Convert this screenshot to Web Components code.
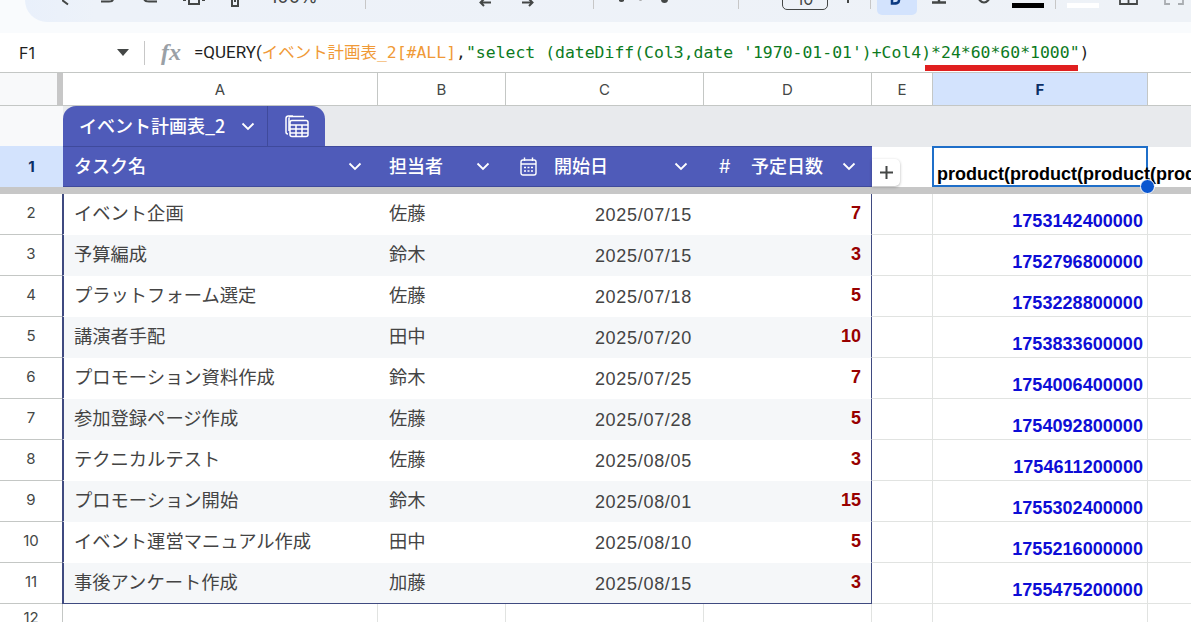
<!DOCTYPE html>
<html lang="ja">
<head>
<meta charset="utf-8">
<title>イベント計画表</title>
<style>
  html, body { margin: 0; height: 622px; overflow: hidden; background: #fff; }
  body {
    --cols: 63px 315px 128px 198px 168px 61px 215px 1fr;
    --cell-font: "Liberation Sans", "Noto Sans CJK JP", sans-serif;
    --ui-font: Inter, Roboto, "Noto Sans CJK JP", sans-serif;
    font-family: var(--cell-font);
  }
</style>
</head>
<body>
<sheet-toolbar></sheet-toolbar>
<formula-bar cell="F1">
  <fx-token>=QUERY(</fx-token><fx-token kind="range">イベント計画表_2[#ALL]</fx-token><fx-token kind="mono">,</fx-token><fx-token kind="str">"select (dateDiff(Col3,date '1970-01-01')+Col4)*24*60*60*1000"</fx-token><fx-token kind="mono">)</fx-token>
</formula-bar>
<column-headers></column-headers>
<table-tab-row name="イベント計画表_2"></table-tab-row>
<table-header-row></table-header-row>
<freeze-line></freeze-line>
<div id="rows"></div>

<script>
// chevron used by the table header and the tab
const chevron = `<svg width="14" height="9" viewBox="0 0 14 9" fill="none" stroke="#fff" stroke-width="1.8"><path d="M1.5 1.5 7 7l5.5-5.5"/></svg>`;

class SheetToolbar extends HTMLElement {
    constructor() {
        super();
        this.attachShadow({ mode: 'open' });
    }
    connectedCallback() {
        const ic = (left, width, body) =>
            `<svg style="margin-left:${left}px;flex:none" width="${width}" height="22" viewBox="0 0 ${width} 22" fill="none" stroke="#444746" stroke-width="2">${body}</svg>`;
        this.shadowRoot.innerHTML = `
            <style>
                :host { display: block; height: 33px; background: #f9fbfd; overflow: hidden; }
                .pill {
                    display: flex; align-items: flex-start; height: 22px; margin-left: 25px;
                    background: linear-gradient(90deg, #e9f0fb 0, #edf2f9 70px, #eef2f7 100%);
                    border-bottom-left-radius: 22px; overflow: hidden;
                }
                .zoom { flex: none; margin: -14px 0 0 31px; width: 50px; font: 18px var(--ui-font); color: #444746; }
                .sep { flex: none; width: 1px; height: 9px; background: #c7c7c7; }
                .size { flex: none; box-sizing: border-box; margin: -12px 0 0 0; width: 46px; height: 22px; border: 1px solid #444746; border-radius: 5px; text-align: center; font: 16px var(--ui-font); color: #444746; }
                .bold { flex: none; width: 40px; height: 15px; background: #d3e3fd; border-radius: 0 0 5px 5px; margin-left: 6px; }
                .bar { flex: none; width: 32px; height: 5px; margin-top: 3px; }
            </style>
            <div class="pill">
                ${ic(37, 7, '<path d="M0 0 6 4.5"/>')}
                ${ic(32, 14, '<path d="M0 1.5h8q4 0 4-2.5"/>')}
                ${ic(27, 16, '<path d="M15 1.5H7Q2 1.500 2-2"/>')}
                ${ic(25, 22, '<path d="M0 0h3v0M19 0h3M6 0v4h10V0"/>')}
                ${ic(26, 8, '<path d="M1 0v6h6V0M4 0v2"/>')}
                <span class="zoom">100%</span>
                <span class="sep" style="margin-left:45px"></span>
                ${ic(113, 12, '<path d="M12 2.500H2M5-1 1.500 2.500 5 6"/>')}
                ${ic(31, 12, '<path d="M0 2.500h10M7-1l3.500 3.500L7 6"/>')}
                <span class="sep" style="margin-left:59px"></span>
                ${ic(25, 5, '<circle cx="2.500" cy="-1" r="2" fill="#444746"/>')}
                ${ic(14, 5, '<circle cx="2.500" cy="-1" r="1.500" stroke-width="1" stroke="#999"/>')}
                ${ic(18, 7, '<circle cx="3.500" cy="-.5" r="2.500" fill="#444746"/>')}
                <span class="sep" style="margin-left:70px"></span>
                <span class="size" style="margin-left:43px">10</span>
                ${ic(18, 4, '<path d="M2 0v3"/>')}
                <span class="sep" style="margin-left:20px"></span>
                <span class="bold"></span>
                ${ic(-27, 12, '<path d="M2-3Q9-3 9 .5T2 3.500z" stroke="#0b3a82" stroke-width="2.500"/>')}
                ${ic(30, 14, '<path d="M0 2.500h14M7 0v2" stroke-width="2.400"/>')}
                ${ic(31, 14, '<path d="M1.500-4a5.500 6.500 0 0 0 11 0" stroke-width="2.200"/>')}
                <span class="bar" style="margin-left:21px;background:#000"></span>
                <span class="sep" style="margin-left:11px"></span>
                <span class="bar" style="margin-left:11px;background:#fff"></span>
                ${ic(20, 19, '<path d="M1 0v4h17V0M9.500 0v4" stroke-width="1.800"/>')}
                ${ic(26, 20, '<path d="M1 0v4h5M14 4h5V0" stroke="#a9adb1" stroke-width="1.800"/>')}
            </div>
        `;
    }
}
customElements.define('sheet-toolbar', SheetToolbar);

class FxToken extends HTMLElement {
    constructor() {
        super();
        this.attachShadow({ mode: 'open' });
        // no whitespace round the slot: tokens sit edge to edge
        this.shadowRoot.innerHTML = `<style>
                :host { color: #1f1f1f; font-family: "Roboto", "Noto Sans CJK JP", sans-serif; }
                :host([kind]) { font-family: "DejaVu Sans Mono", "Noto Sans CJK JP", monospace; font-size: 16.45px; }
                :host([kind="range"]) { color: #f09a37; }
                :host([kind="str"]) { color: #0c7a1e; }
            </style><slot></slot>`;
    }
}
customElements.define('fx-token', FxToken);

class FormulaBar extends HTMLElement {
    constructor() {
        super();
        this.attachShadow({ mode: 'open' });
    }
    connectedCallback() {
        this.shadowRoot.innerHTML = `
            <style>
                :host { display: flex; align-items: center; position: relative; height: 39px; border-bottom: 1px solid #c4c7c5; background: #fff; }
                .name { width: 98px; margin-left: 19px; font: 16px var(--ui-font); color: #1f1f1f; }
                .caret { width: 0; height: 0; border: 6px solid transparent; border-top: 7px solid #444746; border-bottom: 0; }
                .sep { width: 1px; height: 24px; background: #c7c7c7; margin-left: 15px; }
                .fx { margin-left: 16px; width: 33px; font: italic bold 24px "Liberation Serif", serif; color: #9aa0a6; }
                .text { font-size: 17px; white-space: nowrap; margin-bottom: 3px; }
                /* annotation drawn over the bar */
                .mark { position: absolute; left: 925px; top: 32px; width: 153px; height: 6px; background: #e01f1f; }
            </style>
            <span class="name">${this.getAttribute('cell')}</span>
            <span class="caret"></span>
            <span class="sep"></span>
            <span class="fx">fx</span>
            <span class="text"><slot></slot></span>
            <span class="mark"></span>
        `;
    }
}
customElements.define('formula-bar', FormulaBar);

class ColumnHeaders extends HTMLElement {
    constructor() {
        super();
        this.attachShadow({ mode: 'open' });
    }
    connectedCallback() {
        const labels = ['A', 'B', 'C', 'D', 'E', 'F', ''];
        this.shadowRoot.innerHTML = `
            <style>
                :host { display: grid; grid-template-columns: var(--cols); height: 33px; border-bottom: 1px solid #c4c7c5; box-sizing: border-box; }
                .corner { background: #f8f9fa; border-right: 6px solid #c7c7c7; }
                .col { display: flex; align-items: center; justify-content: center; border-right: 1px solid #c4c7c5; font: 15px var(--ui-font); color: #444746; }
                .col.on { background: #d3e3fd; color: #0b2f66; font-weight: 700; }
                .col:last-child { border-right: 0; }
            </style>
            <div class="corner"></div>
            ${labels.map(l => `<div class="col ${l === 'F' ? 'on' : ''}">${l}</div>`).join('')}
        `;
    }
}
customElements.define('column-headers', ColumnHeaders);

class TableTabRow extends HTMLElement {
    constructor() {
        super();
        this.attachShadow({ mode: 'open' });
    }
    connectedCallback() {
        this.shadowRoot.innerHTML = `
            <style>
                :host { display: grid; grid-template-columns: 63px 1fr; height: 40px; }
                .side { background: #f8f9fa; border-bottom: 1px solid #c4c7c5; box-sizing: border-box; }
                .lane { background: #e8eaed; display: flex; align-items: flex-end; }
                .tab { display: flex; align-items: stretch; height: 41px; width: 262px; flex: none; background: #4f5bb9; border-radius: 13px 13px 0 0; color: #fff; }
                .title { display: flex; align-items: center; width: 205px; padding-left: 16px; box-sizing: border-box; border-right: 1px solid #3f4a9c; font: 500 18px "Noto Sans CJK JP", sans-serif; }
                .title span { margin-bottom: 3px; }
                .title svg { margin-left: 16px; }
                .calc { flex: 1; display: flex; align-items: center; justify-content: center; }
            </style>
            <div class="side"></div>
            <div class="lane">
                <div class="tab">
                    <div class="title"><span>${this.getAttribute('name')}</span>${chevron}</div>
                    <div class="calc">
                        <svg width="24" height="23" viewBox="0 0 24 23" fill="none" stroke="#fff" stroke-width="1.500">
                            <path d="M8 1H3.500Q1 1 1 3.500V17q0 2 2 2M4 2.500V16M4 1.500h15"/>
                            <rect x="5" y="5.500" width="18" height="16" rx="2" fill="#4f5bb9"/>
                            <path d="M5 10h18M5 14h18M5 18h18M11 10v12M17 10v12"/>
                        </svg>
                    </div>
                </div>
            </div>
        `;
    }
}
customElements.define('table-tab-row', TableTabRow);

class TableHeaderRow extends HTMLElement {
    constructor() {
        super();
        this.attachShadow({ mode: 'open' });
    }
    connectedCallback() {
        const calendar = `<svg width="17" height="19" viewBox="0 0 17 19" fill="none" stroke="#fff" stroke-width="1.400"><rect x="1" y="3" width="15" height="15" rx="2"/><path d="M1 7h15M4.500 .5V4M12.500 .5V4"/><path d="M4 10.500h2M7.500 10.500h2M11 10.500h2M4 14h2M7.500 14h2M11 14h2" stroke-width="1.300"/></svg>`;
        this.shadowRoot.innerHTML = `
            <style>
                :host { display: grid; grid-template-columns: var(--cols); height: 41px; position: relative; }
                .num { display: flex; align-items: center; justify-content: center; background: #d3e3fd; font: bold 15px var(--ui-font); color: #0b2f66; }
                .head { display: flex; align-items: center; background: #4f5bb9; color: #fff; font: 500 18px "Noto Sans CJK JP", sans-serif; padding: 0 16px 0 11px; border-top: 1px solid #3f4a9c; border-bottom: 1px solid #3f4a9c; box-sizing: border-box; }
                .head span { margin-bottom: 4px; }
                .head svg:last-child { margin-left: auto; }
                .head.c { padding-left: 14px; }
                .head.c span { margin-left: 17px; }
                .head.d { padding-left: 15px; }
                .head.d span { margin-left: 16px; }
                .head.d .hash { font: 400 18px var(--ui-font); width: 16px; margin: 0; }
                .e { position: relative; }
                .f { box-sizing: border-box; border: 2px solid #1f6fc9; padding: 0 0 0 3px; display: flex; align-items: flex-end; font-weight: 700; font-size: 18px; color: #000; white-space: nowrap; position: relative; margin: 0 0 0 -1px; }
                .dot { position: absolute; right: -9px; bottom: -9px; width: 13px; height: 13px; border-radius: 50%; background: #0b57d0; border: 1px solid #fff; }
                .add { position: absolute; left: 0; top: 13px; width: 28px; height: 27px; background: #fff; border-radius: 0 5px 5px 0; box-shadow: 0 1px 3px rgba(0,0,0,.3); display: flex; align-items: center; justify-content: center; }
            </style>
            <div class="num">1</div>
            <div class="head"><span>タスク名</span>${chevron}</div>
            <div class="head"><span>担当者</span>${chevron}</div>
            <div class="head c">${calendar}<span>開始日</span>${chevron}</div>
            <div class="head d"><span class="hash">#</span><span>予定日数</span>${chevron}</div>
            <div class="e">
                <div class="add"><svg width="15" height="15" viewBox="0 0 15 15" stroke="#444746" stroke-width="2"><path d="M7.500 1v13M1 7.500h13"/></svg></div>
            </div>
            <div class="f">product(product(product(product(<span class="dot"></span></div>
            <div></div>
        `;
    }
}
customElements.define('table-header-row', TableHeaderRow);

class FreezeLine extends HTMLElement {
    constructor() {
        super();
        this.attachShadow({ mode: 'open' });
        this.shadowRoot.innerHTML = `<style>:host { display: block; height: 7px; background: #c7c7c7; }</style>`;
    }
}
customElements.define('freeze-line', FreezeLine);

class DataRow extends HTMLElement {
    constructor() {
        super();
        this.attachShadow({ mode: 'open' });
    }
    connectedCallback() {
        const a = n => this.getAttribute(n) || '';
        this.shadowRoot.innerHTML = `
            <style>
                :host { display: grid; grid-template-columns: var(--cols); height: 41px; font-size: 18.3px; color: #444; }
                div { box-sizing: border-box; display: flex; align-items: center; border-bottom: 1px solid #e1e3e1; white-space: nowrap; }
                .num { justify-content: center; border-bottom-color: #c4c7c5; border-right: 1px solid #c4c7c5; padding-bottom: 4px; font: 15px var(--ui-font); color: #444746; }
                .t { border-bottom-color: transparent; padding: 0 0 4px 11px; }
                .t.first { border-left: 2px solid #3f4a80; margin-left: -1px; padding-left: 10px; }
                :host([band]) .t { background: #f5f7f9; }
                :host([last]) .t { border-bottom: 1px solid #3f4a80; }
                .t.date { justify-content: flex-end; padding: 2px 12px 0 0; font-size: 18px; letter-spacing: .7px; }
                .t.days { justify-content: flex-end; padding: 0 10px 2px 0; font-size: 18px; font-weight: 700; color: #980000; border-right: 1px solid #3f4a80; }
                .cell { border-right: 1px solid #e1e3e1; }
                .ts { justify-content: flex-end; align-items: flex-end; padding: 0 4px 2px 0; font-weight: 700; color: #0d0dd6; font-size: 18px; letter-spacing: .05px; }
            </style>
            <div class="num">${a('n')}</div>
            <div class="t first">${a('task')}</div>
            <div class="t">${a('owner')}</div>
            <div class="t date">${a('date')}</div>
            <div class="t days">${a('days')}</div>
            <div class="cell"></div>
            <div class="cell ts">${a('ts')}</div>
            <div></div>
        `;
    }
}
customElements.define('data-row', DataRow);

class BlankRow extends HTMLElement {
    constructor() {
        super();
        this.attachShadow({ mode: 'open' });
    }
    connectedCallback() {
        const cols = ['c', 'c', 'c', 'c', 'c', 'c', ''];
        this.shadowRoot.innerHTML = `
            <style>
                :host { display: grid; grid-template-columns: var(--cols); height: 41px; }
                .num { text-align: center; padding-top: 4px; border-right: 1px solid #c4c7c5; font: 15px var(--ui-font); color: #444746; }
                .c { border-right: 1px solid #e1e3e1; }
            </style>
            <div class="num">${this.getAttribute('n')}</div>
            ${cols.map(c => `<div class="${c}"></div>`).join('')}
        `;
    }
}
customElements.define('blank-row', BlankRow);

const tasks = [
    ['イベント企画', '佐藤', '2025/07/15', 7, '1753142400000'],
    ['予算編成', '鈴木', '2025/07/15', 3, '1752796800000'],
    ['プラットフォーム選定', '佐藤', '2025/07/18', 5, '1753228800000'],
    ['講演者手配', '田中', '2025/07/20', 10, '1753833600000'],
    ['プロモーション資料作成', '鈴木', '2025/07/25', 7, '1754006400000'],
    ['参加登録ページ作成', '佐藤', '2025/07/28', 5, '1754092800000'],
    ['テクニカルテスト', '佐藤', '2025/08/05', 3, '1754611200000'],
    ['プロモーション開始', '鈴木', '2025/08/01', 15, '1755302400000'],
    ['イベント運営マニュアル作成', '田中', '2025/08/10', 5, '1755216000000'],
    ['事後アンケート作成', '加藤', '2025/08/15', 3, '1755475200000'],
];

const rows = document.getElementById('rows');
tasks.forEach((t, i) => {
    const row = document.createElement('data-row');
    row.setAttribute('n', i + 2);
    row.setAttribute('task', t[0]);
    row.setAttribute('owner', t[1]);
    row.setAttribute('date', t[2]);
    row.setAttribute('days', t[3]);
    row.setAttribute('ts', t[4]);
    if (i % 2) row.setAttribute('band', '');
    if (i === tasks.length - 1) row.setAttribute('last', '');
    rows.appendChild(row);
});
const blank = document.createElement('blank-row');
blank.setAttribute('n', 12);
rows.appendChild(blank);
</script>
</body>
</html>
